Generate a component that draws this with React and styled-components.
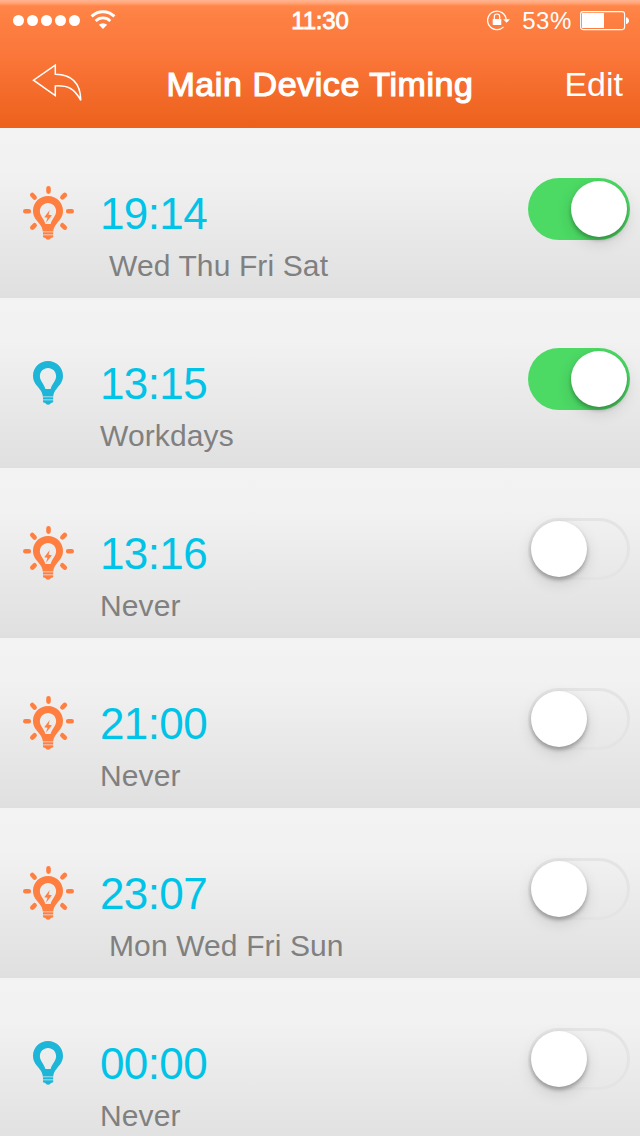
import React, { useState } from "react";
import styled, { createGlobalStyle, css } from "styled-components";

const timers = [
    { time: "19:14", days: "Wed Thu Fri Sat", indent: true, lit: true, on: true },
    { time: "13:15", days: "Workdays", lit: false, on: true },
    { time: "13:16", days: "Never", lit: true, on: false },
    { time: "21:00", days: "Never", lit: true, on: false },
    { time: "23:07", days: "Mon Wed Fri Sun", indent: true, lit: true, on: false },
    { time: "00:00", days: "Never", lit: false, on: false },
];

function WifiIcon() {
    return (
        <svg width="26" height="20" viewBox="0 0 26 20" fill="none" stroke="#fff">
            <path d="M1.6 6.4a16.2 16.2 0 0 1 22.8 0" strokeWidth="3" />
            <path d="M5.7 10.9a10.3 10.3 0 0 1 14.6 0" strokeWidth="2.8" />
            <path d="M13 19l-4.1-4.2a5.9 5.9 0 0 1 8.2 0z" fill="#fff" stroke="none" />
        </svg>
    );
}

function RotationLockIcon() {
    return (
        <svg width="24" height="22" viewBox="0 0 24 22" fill="none" stroke="#fff">
            <path d="M16.6 17.9A9.300 9.300 0 1 1 19.200 10.500" strokeWidth="1.300" />
            <path d="M16.200 10.200h6.800l-3.400 3.500z" fill="#fff" stroke="none" />
            <path d="M7.300 10V7.700a2.700 2.700 0 0 1 5.400 0V10" strokeWidth="1.200" />
            <rect x="5.700" y="9.900" width="8.600" height="6.200" rx="0.500" fill="#fff" stroke="none" />
        </svg>
    );
}

function BatteryIcon() {
    return (
        <svg width="50" height="20" viewBox="0 0 50 20">
            <rect x="0.6" y="0.6" width="44" height="18" rx="2.5" fill="none" stroke="#fff" strokeWidth="1.1" />
            <rect x="2" y="2" width="22" height="15" rx="0.6" fill="#fff" />
            <path d="M46 6.200c1.500 0 3 1.400 3 3.400s-1.500 3.400-3 3.400z" fill="#fff" />
        </svg>
    );
}

function BackIcon() {
    return (
        <svg width="52" height="42" viewBox="0 0 52 42" fill="none" stroke="#fff" strokeWidth="1.5">
            <path d="M24.300 2.200L2.500 17.200l21.800 15.300v-9.600C36.500 22.300 43 25 49.800 37.300 49.500 22 42 11.500 24.300 11.300z" />
        </svg>
    );
}

function BulbIcon({ lit }) {
    return (
        <svg width="54" height="56" viewBox="0 0 54 56" fill={lit ? "#ff7f41" : "#1db6d8"}>
            <path
                fillRule="evenodd"
                d="M27 10c-8.400 0-15 6.600-15 14.800 0 5.400 2.600 8.600 5.800 12.200 2.600 3 3.800 5.700 4 8.500h10.400c.2-2.800 1.400-5.500 4-8.500 3.200-3.600 5.800-6.800 5.800-12.200C42 16.600 35.400 10 27 10zm0 7c-4.500 0-8.100 3.600-8.100 8.200 0 4.900 4.200 7.500 5.500 12.800h5.200c1.300-5.300 5.500-7.900 5.500-12.800 0-4.600-3.600-8.200-8.100-8.200z"
            />
            <path d="M22 46.300h10.200v2.200H22zM22 49.300h10.200v1.900l-2.300.9c-.7 1.300-1.300 1.700-2.800 1.700s-2.100-.4-2.800-1.700l-2.300-.9z" />
            {lit && (
                <>
                    <path d="M28.700 24l-5.400 7.200 3.200.6-1.500 5 5.900-7.500-3.300-.6z" />
                    <g stroke="#ff7f41" strokeWidth="4.600" strokeLinecap="round">
                        <path d="M27.500 2.400v3.200M4.300 25.300h3.500M47.200 25.300h3.500M11.300 9l2.300 2.500M43.800 9l-2.400 2.400M11.300 41.600l2.300-2.300M43.800 41.600l-2.400-2.300" />
                    </g>
                </>
            )}
        </svg>
    );
}

function TimerRow({ timer }) {
    const [on, setOn] = useState(timer.on);

    return (
        <Row>
            <IconCell $lit={timer.lit}>
                <BulbIcon lit={timer.lit} />
            </IconCell>
            <Details>
                <Time>{timer.time}</Time>
                <Days $indent={timer.indent}>{timer.days}</Days>
            </Details>
            <Switch
                role="switch"
                aria-checked={on}
                $on={on}
                onClick={() => setOn((prev) => !prev)}
            >
                <Knob />
            </Switch>
        </Row>
    );
}

export default function App() {
    return (
        <Screen>
            <GlobalStyle />
            <Header>
                <StatusBar>
                    <Signal>
                        {[0, 1, 2, 3, 4].map((n) => (
                            <Dot key={n} />
                        ))}
                        <WifiIcon />
                    </Signal>
                    <Clock>11:30</Clock>
                    <Power>
                        <RotationLockIcon />
                        <Percent>53%</Percent>
                        <BatteryIcon />
                    </Power>
                </StatusBar>
                <NavBar>
                    <BackButton aria-label="Back">
                        <BackIcon />
                    </BackButton>
                    <Title>Main Device Timing</Title>
                    <EditButton>Edit</EditButton>
                </NavBar>
            </Header>
            {timers.map((timer) => (
                <TimerRow key={timer.time} timer={timer} />
            ))}
        </Screen>
    );
}

const GlobalStyle = createGlobalStyle`
    * {
        box-sizing: border-box;
    }

    body {
        margin: 0;
        font-family: "Liberation Sans", Arial, sans-serif;
    }

    svg {
        display: block;
        flex-shrink: 0;
    }
`;

const buttonReset = css`
    border: 0;
    background: none;
    color: inherit;
    font-family: inherit;
`;

const Screen = styled.div`
    width: 640px;
    height: 1136px;
    overflow: hidden;
    background: #f3f3f3;
`;

const Header = styled.header`
    height: 128px;
    color: #fff;
    background: linear-gradient(
        #ffb592 0,
        #ffa577 3px,
        #ff8548 6px,
        #fe7f42 20px,
        #fb763a 56px,
        #ed621d 124px,
        #ed611c 128px
    );
`;

const StatusBar = styled.div`
    display: grid;
    grid-template-columns: 1fr auto 1fr;
    align-items: center;
    height: 40px;
    padding: 0 10px 0 13px;
`;

const Signal = styled.div`
    display: flex;
    align-items: center;
    gap: 3px;

    svg {
        margin-left: 7px;
    }
`;

const Dot = styled.span`
    width: 11px;
    height: 11px;
    border-radius: 50%;
    background: #fff;
`;

/* medium weight: regular glyphs thickened with a stroke */
const Clock = styled.span`
    margin-left: -3px;
    padding-top: 2px;
    font-size: 24px;
    line-height: 28px;
    letter-spacing: -0.2px;
    -webkit-text-stroke: 0.8px #fff;
`;

const Power = styled.div`
    display: flex;
    align-items: center;
    justify-content: flex-end;

    svg:last-child {
        margin-top: 2px;
    }
`;

const Percent = styled.span`
    margin: 2px 8px 0 11px;
    font-size: 24px;
    line-height: 28px;
    letter-spacing: 0.6px;
`;

const NavBar = styled.div`
    display: grid;
    grid-template-columns: 1fr auto 1fr;
    align-items: center;
    height: 88px;
    padding: 0 17px;
`;

const BackButton = styled.button`
    ${buttonReset}
    justify-self: start;
    padding: 0 0 0 14px;
`;

const Title = styled.h1`
    margin: 0;
    font-size: 34px;
    line-height: 40px;
    font-weight: normal;
    letter-spacing: 0.58px;
    white-space: nowrap;
    -webkit-text-stroke: 1.2px #fff;
`;

const EditButton = styled.button`
    ${buttonReset}
    justify-self: end;
    padding: 0;
    font-size: 34px;
    line-height: 40px;
`;

const Row = styled.div`
    display: flex;
    height: 170px;
    padding-right: 10px;
    background: linear-gradient(#f3f3f3 0, #f2f2f2 42px, #e9e9e9 102px, #e0e0e0 168px, #dedede 170px);
`;

const IconCell = styled.div`
    width: 98px;
    padding: ${(props) => (props.$lit ? 58 : 53)}px 0 0 21px;
`;

const Details = styled.div`
    flex: 1;
    padding-top: 61px;
`;

const Time = styled.div`
    padding-left: 2px;
    font-size: 44px;
    line-height: 50px;
    letter-spacing: -0.6px;
    color: #00c3e8;
`;

const Days = styled.div`
    padding-left: ${(props) => (props.$indent ? 11 : 2)}px;
    font-size: 30px;
    line-height: 34px;
    letter-spacing: 0.12px;
    margin-top: 10px;
    color: #808080;
`;

const Switch = styled.button`
    ${buttonReset}
    display: flex;
    align-items: center;
    justify-content: ${(props) => (props.$on ? "flex-end" : "flex-start")};
    width: 102px;
    height: 62px;
    margin-top: 50px;
    padding: 3px;
    border-radius: 31px;
    background: ${(props) => (props.$on ? "#4cd964" : "transparent")};
    box-shadow: ${(props) => (props.$on ? "none" : "inset 0 0 0 3px #e4e4e4")};
`;

const Knob = styled.span`
    width: 56px;
    height: 56px;
    border-radius: 50%;
    background: #fff;
    box-shadow: 0 3px 4px rgba(0, 0, 0, 0.28), 0 6px 16px rgba(0, 0, 0, 0.12);
`;
